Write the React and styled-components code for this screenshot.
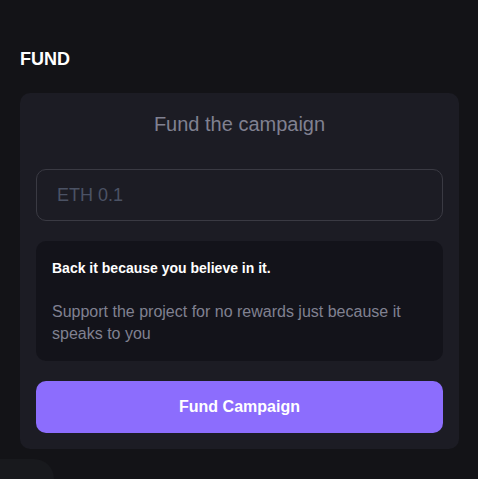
import React from 'react';
import styled, { createGlobalStyle } from 'styled-components';

const GlobalStyle = createGlobalStyle`
  html, body {
    margin: 0;
    padding: 0;
    background: #131317;
    font-family: 'Liberation Sans', Arial, sans-serif;
    overflow: hidden;
  }
`;

const Page = styled.div`
  padding: 46px 19px 0 20px;
  height: 479px;
  box-sizing: border-box;
`;

const Heading = styled.h4`
  margin: 0;
  font-size: 18px;
  line-height: 26px;
  font-weight: 700;
  color: #fff;
  text-transform: uppercase;
`;

const Card = styled.div`
  margin-top: 21px;
  background: #1c1c24;
  border-radius: 10px;
  padding: 16px;
  display: flex;
  flex-direction: column;
`;

const CardTitle = styled.p`
  margin: 0;
  text-align: center;
  font-size: 20px;
  line-height: 30px;
  color: #808191;
`;

const Form = styled.div`
  margin-top: 30px;
  display: flex;
  flex-direction: column;
  gap: 20px;
`;

const Input = styled.input`
  box-sizing: border-box;
  width: 100%;
  height: 52px;
  padding: 0 20px;
  background: transparent;
  border: 1px solid #3a3a43;
  border-radius: 10px;
  outline: none;
  font-family: inherit;
  font-size: 18px;
  color: #fff;

  &::placeholder {
    color: #4b5264;
  }
`;

const Note = styled.div`
  background: #13131a;
  border-radius: 10px;
  padding: 16px;
`;

const NoteTitle = styled.h4`
  margin: 0;
  font-size: 14px;
  line-height: 22px;
  font-weight: 700;
  color: #fff;
`;

const NoteText = styled.p`
  margin: 22px 0 0;
  font-size: 16px;
  line-height: 22px;
  color: #808191;
`;

const Button = styled.button`
  height: 52px;
  border: none;
  border-radius: 10px;
  background: #8c6dfd;
  color: #fff;
  font-family: inherit;
  font-size: 16px;
  font-weight: 700;
  cursor: pointer;
`;

const Dock = styled.div`
  margin: 10px 0 0 -20px;
  width: 54px;
  height: 40px;
  background: #18191d;
  border-top-right-radius: 20px;
`;

const App = () => {
  return (
    <>
      <GlobalStyle />
      <Page>
        <Heading>Fund</Heading>
        <Card>
          <CardTitle>Fund the campaign</CardTitle>
          <Form>
            <Input type='number' placeholder='ETH 0.1' step='0.01' />
            <Note>
              <NoteTitle>Back it because you believe in it.</NoteTitle>
              <NoteText>
                Support the project for no rewards just because it speaks to you
              </NoteText>
            </Note>
            <Button>Fund Campaign</Button>
          </Form>
        </Card>
        <Dock />
      </Page>
    </>
  );
};

export default App;
